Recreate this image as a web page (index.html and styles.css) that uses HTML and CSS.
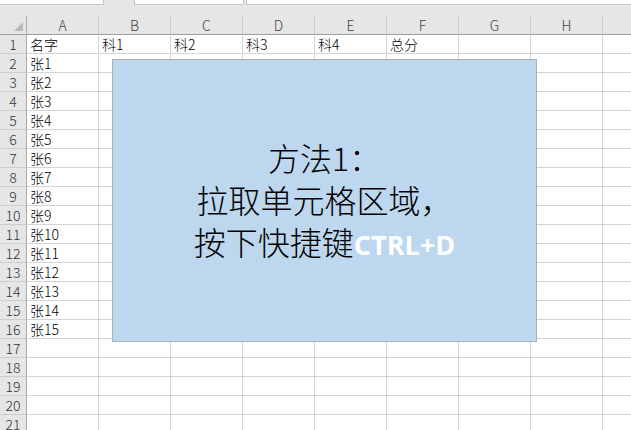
FILE: index.html
```html
<!DOCTYPE html>
<html>
<head>
<meta charset="utf-8">
<link rel="stylesheet" href="styles.css">
</head>
<body>
<div class="top">
  <div class="box box1"></div>
  <div class="box box2"></div>
  <div class="box box3"></div>
</div>
<div class="sheet">
  <div class="row head">
    <div class="rh corner"><svg class="tri" width="26" height="18" viewBox="0 0 26 18"><polygon points="14,13 23,13 23,4" fill="#b8b8b8"/></svg></div>
    <div class="ch">A</div><div class="ch">B</div><div class="ch">C</div><div class="ch">D</div><div class="ch">E</div><div class="ch">F</div><div class="ch">G</div><div class="ch">H</div><div class="ch last"></div>
  </div>
  <div class="row"><div class="rh">1</div><div class="c">名字</div><div class="c">科1</div><div class="c">科2</div><div class="c">科3</div><div class="c">科4</div><div class="c">总分</div><div class="c"></div><div class="c"></div><div class="c last"></div></div>
  <div class="row"><div class="rh">2</div><div class="c">张1</div><div class="c"></div><div class="c"></div><div class="c"></div><div class="c"></div><div class="c"></div><div class="c"></div><div class="c"></div><div class="c last"></div></div>
  <div class="row"><div class="rh">3</div><div class="c">张2</div><div class="c"></div><div class="c"></div><div class="c"></div><div class="c"></div><div class="c"></div><div class="c"></div><div class="c"></div><div class="c last"></div></div>
  <div class="row"><div class="rh">4</div><div class="c">张3</div><div class="c"></div><div class="c"></div><div class="c"></div><div class="c"></div><div class="c"></div><div class="c"></div><div class="c"></div><div class="c last"></div></div>
  <div class="row"><div class="rh">5</div><div class="c">张4</div><div class="c"></div><div class="c"></div><div class="c"></div><div class="c"></div><div class="c"></div><div class="c"></div><div class="c"></div><div class="c last"></div></div>
  <div class="row"><div class="rh">6</div><div class="c">张5</div><div class="c"></div><div class="c"></div><div class="c"></div><div class="c"></div><div class="c"></div><div class="c"></div><div class="c"></div><div class="c last"></div></div>
  <div class="row"><div class="rh">7</div><div class="c">张6</div><div class="c"></div><div class="c"></div><div class="c"></div><div class="c"></div><div class="c"></div><div class="c"></div><div class="c"></div><div class="c last"></div></div>
  <div class="row"><div class="rh">8</div><div class="c">张7</div><div class="c"></div><div class="c"></div><div class="c"></div><div class="c"></div><div class="c"></div><div class="c"></div><div class="c"></div><div class="c last"></div></div>
  <div class="row"><div class="rh">9</div><div class="c">张8</div><div class="c"></div><div class="c"></div><div class="c"></div><div class="c"></div><div class="c"></div><div class="c"></div><div class="c"></div><div class="c last"></div></div>
  <div class="row"><div class="rh">10</div><div class="c">张9</div><div class="c"></div><div class="c"></div><div class="c"></div><div class="c"></div><div class="c"></div><div class="c"></div><div class="c"></div><div class="c last"></div></div>
  <div class="row"><div class="rh">11</div><div class="c">张10</div><div class="c"></div><div class="c"></div><div class="c"></div><div class="c"></div><div class="c"></div><div class="c"></div><div class="c"></div><div class="c last"></div></div>
  <div class="row"><div class="rh">12</div><div class="c">张11</div><div class="c"></div><div class="c"></div><div class="c"></div><div class="c"></div><div class="c"></div><div class="c"></div><div class="c"></div><div class="c last"></div></div>
  <div class="row"><div class="rh">13</div><div class="c">张12</div><div class="c"></div><div class="c"></div><div class="c"></div><div class="c"></div><div class="c"></div><div class="c"></div><div class="c"></div><div class="c last"></div></div>
  <div class="row"><div class="rh">14</div><div class="c">张13</div><div class="c"></div><div class="c"></div><div class="c"></div><div class="c"></div><div class="c"></div><div class="c"></div><div class="c"></div><div class="c last"></div></div>
  <div class="row"><div class="rh">15</div><div class="c">张14</div><div class="c"></div><div class="c"></div><div class="c"></div><div class="c"></div><div class="c"></div><div class="c"></div><div class="c"></div><div class="c last"></div></div>
  <div class="row"><div class="rh">16</div><div class="c">张15</div><div class="c"></div><div class="c"></div><div class="c"></div><div class="c"></div><div class="c"></div><div class="c"></div><div class="c"></div><div class="c last"></div></div>
  <div class="row"><div class="rh">17</div><div class="c"></div><div class="c"></div><div class="c"></div><div class="c"></div><div class="c"></div><div class="c"></div><div class="c"></div><div class="c"></div><div class="c last"></div></div>
  <div class="row"><div class="rh">18</div><div class="c"></div><div class="c"></div><div class="c"></div><div class="c"></div><div class="c"></div><div class="c"></div><div class="c"></div><div class="c"></div><div class="c last"></div></div>
  <div class="row"><div class="rh">19</div><div class="c"></div><div class="c"></div><div class="c"></div><div class="c"></div><div class="c"></div><div class="c"></div><div class="c"></div><div class="c"></div><div class="c last"></div></div>
  <div class="row"><div class="rh">20</div><div class="c"></div><div class="c"></div><div class="c"></div><div class="c"></div><div class="c"></div><div class="c"></div><div class="c"></div><div class="c"></div><div class="c last"></div></div>
  <div class="row"><div class="rh">21</div><div class="c"></div><div class="c"></div><div class="c"></div><div class="c"></div><div class="c"></div><div class="c"></div><div class="c"></div><div class="c"></div><div class="c last"></div></div>
</div>
<div class="shape">
  <div class="line">方法1：</div>
  <div class="line">拉取单元格区域，</div>
  <div class="line">按下快捷键<span class="key">CTRL+D</span></div>
</div>
</body>
</html>
```
FILE: styles.css
```css
html, body {
  margin: 0;
  padding: 0;
  background: #e6e6e6;
  overflow: hidden;
  font-family: "Noto Sans CJK SC", "Noto Sans", sans-serif;
}
.top {
  height: 16px;
  display: flex;
  align-items: flex-start;
}
.box {
  height: 4px;
  background: #fff;
  border: 1px solid #c6c6c6;
  border-top: none;
}
.box1 { width: 103px; border-left: none; }
.box2 { width: 108px; margin-left: 30px; }
.box3 { flex: 1; margin-left: 2px; border-right: none; }
.sheet {
  width: 631px;
}
.row {
  display: flex;
  height: 19px;
}
.rh {
  width: 26px;
  flex: none;
  height: 18px;
  border-right: 1px solid #a9a9a9;
  border-bottom: 1px solid #cdcdcd;
  background: #e6e6e6;
  color: #333;
  font-size: 14px;
  font-weight: 300;
  line-height: 18px;
  text-align: center;
}
.head .rh {
  border-bottom: 1px solid #9e9e9e;
  position: relative;
}
.tri {
  position: absolute;
  left: 0;
  top: 2px;
}
.ch {
  width: 71px;
  flex: none;
  height: 18px;
  border-right: 1px solid #cbcbcb;
  border-bottom: 1px solid #9e9e9e;
  background: #e6e6e6;
  color: #444;
  font-size: 14px;
  font-weight: 300;
  line-height: 18px;
  text-align: center;
}
.c {
  width: 68px;
  flex: none;
  height: 18px;
  padding-left: 3px;
  border-right: 1px solid #d4d4d4;
  border-bottom: 1px solid #d4d4d4;
  background: #fff;
  color: #000;
  font-size: 14px;
  font-weight: 300;
  line-height: 18px;
  white-space: nowrap;
}
.c.last, .ch.last {
  flex: 1;
  border-right: none;
}
.shape {
  position: absolute;
  left: 112px;
  top: 59px;
  width: 423px;
  height: 281px;
  background: #bdd7ee;
  border: 1px solid #b0b0b0;
  display: flex;
  flex-direction: column;
  justify-content: center;
  align-items: center;
  font-size: 32px;
  font-weight: 300;
  line-height: 42px;
  color: #000;
}
.line {
  white-space: nowrap;
}
.key {
  font-family: "Open Sans", sans-serif;
  font-weight: 700;
  font-size: 27px;
  color: #fff;
}
```
